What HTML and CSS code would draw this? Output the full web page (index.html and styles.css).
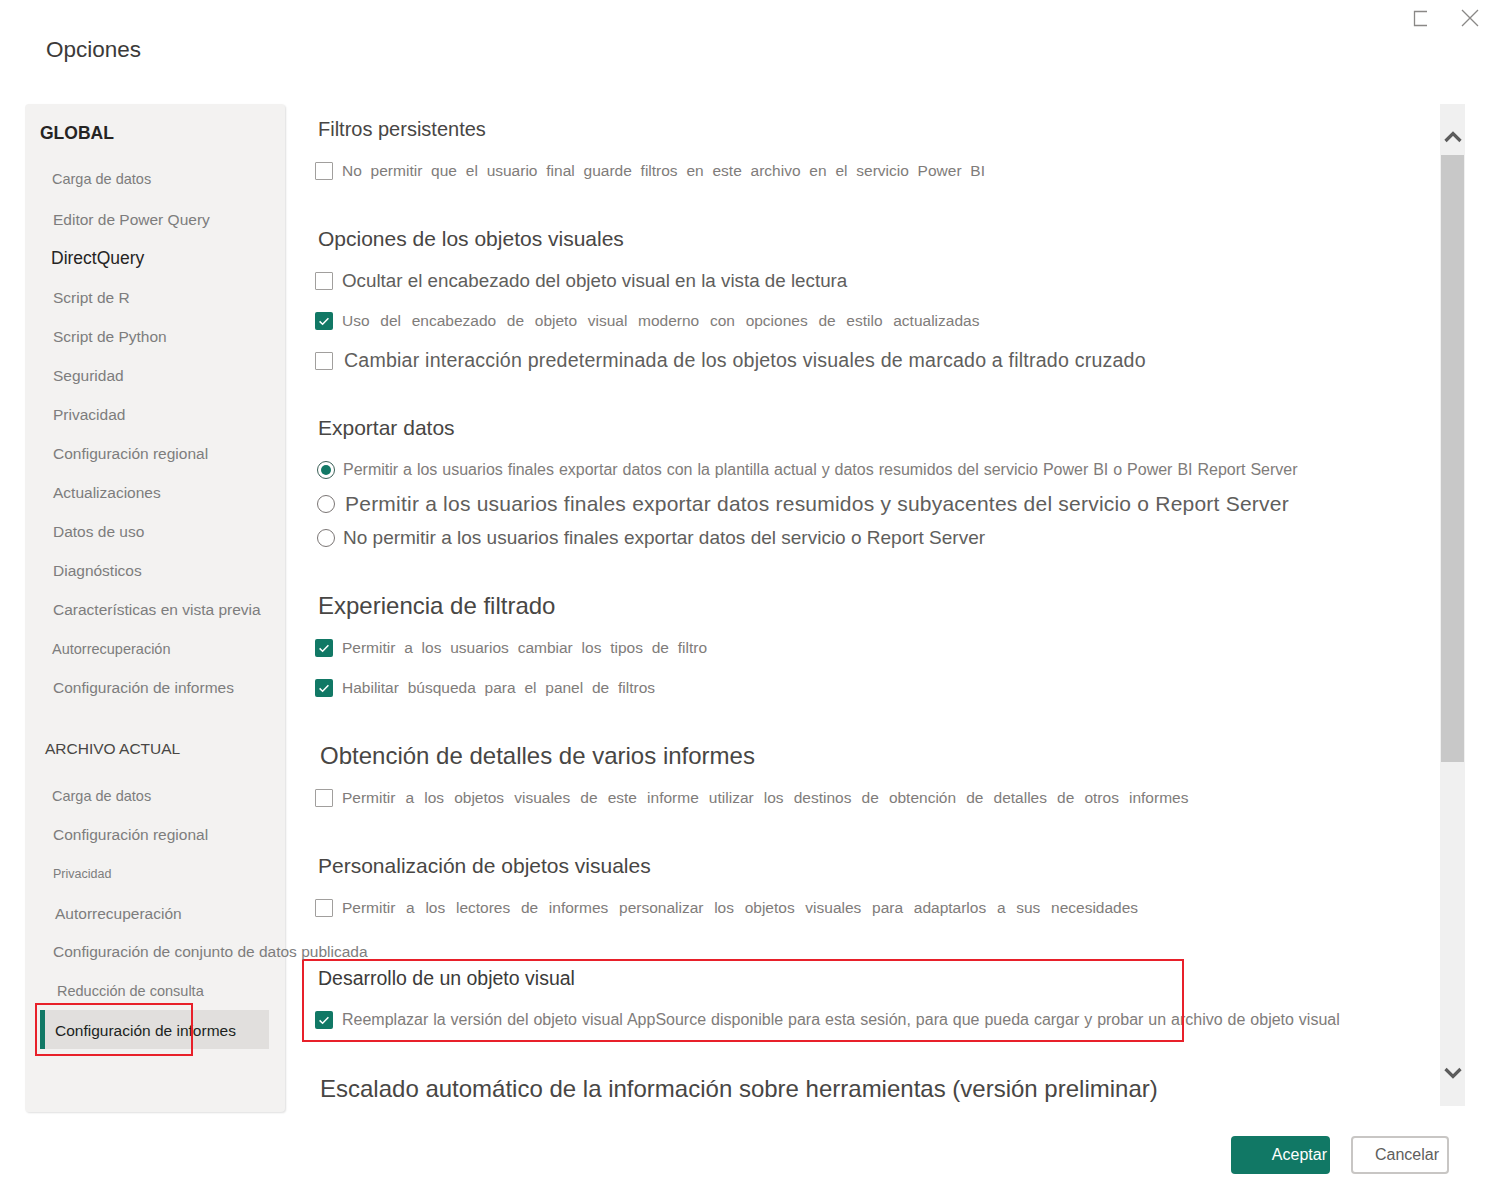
FILE: index.html
```html
<!DOCTYPE html>
<html lang="es">
<head>
<meta charset="utf-8">
<title>Opciones</title>
<link rel="stylesheet" href="styles.css">
</head>
<body>
<div class="window">
  <header class="titlebar">
    <h1 class="title">Opciones</h1>
    <div class="controls">
      <svg class="ctl-max" width="14" height="17" viewBox="0 0 14 17"><path d="M14 1.5H1.5V15.5H14" fill="none" stroke="#8a8886" stroke-width="1.3"/></svg>
      <svg class="ctl-close" width="18" height="18" viewBox="0 0 18 18"><path d="M1 1L17 17M17 1L1 17" fill="none" stroke="#8a8886" stroke-width="1.3"/></svg>
    </div>
  </header>

  <div class="main">
    <nav class="sidebar">
      <div class="nav-head nav-global">GLOBAL</div>
      <div class="nav-list">
        <div class="nav-item s145 nav-first">Carga de datos</div>
        <div class="nav-item">Editor de Power Query</div>
        <div class="nav-item nav-dark">DirectQuery</div>
        <div class="nav-item">Script de R</div>
        <div class="nav-item">Script de Python</div>
        <div class="nav-item">Seguridad</div>
        <div class="nav-item">Privacidad</div>
        <div class="nav-item">Configuración regional</div>
        <div class="nav-item">Actualizaciones</div>
        <div class="nav-item">Datos de uso</div>
        <div class="nav-item">Diagnósticos</div>
        <div class="nav-item">Características en vista previa</div>
        <div class="nav-item s145">Autorrecuperación</div>
        <div class="nav-item">Configuración de informes</div>
      </div>
      <div class="nav-head nav-file">ARCHIVO ACTUAL</div>
      <div class="nav-list nav-list-file">
        <div class="nav-item s145">Carga de datos</div>
        <div class="nav-item">Configuración regional</div>
        <div class="nav-item s125">Privacidad</div>
        <div class="nav-item nav-shift2">Autorrecuperación</div>
        <div class="nav-item">Configuración de conjunto de datos publicada</div>
        <div class="nav-item s145 nav-shift4">Reducción de consulta</div>
        <div class="nav-item nav-selected">Configuración de informes<span class="mark mark-nav"></span></div>
      </div>
    </nav>

    <div class="content">
      <section class="group">
        <h2 class="heading h20">Filtros persistentes</h2>
        <div class="opt"><span class="cb"></span><span class="lbl wide">No permitir que el usuario final guarde filtros en este archivo en el servicio Power BI</span></div>
      </section>

      <section class="group">
        <h2 class="heading h21">Opciones de los objetos visuales</h2>
        <div class="opt"><span class="cb"></span><span class="lbl big19">Ocultar el encabezado del objeto visual en la vista de lectura</span></div>
        <div class="opt"><span class="cb on"><svg width="18" height="18" viewBox="0 0 18 18"><path d="M4.6 9.4L7.6 12.3L13.4 6.3" fill="none" stroke="#fff" stroke-width="1.5"/></svg></span><span class="lbl widest">Uso del encabezado de objeto visual moderno con opciones de estilo actualizadas</span></div>
        <div class="opt"><span class="cb"></span><span class="lbl big20">Cambiar interacción predeterminada de los objetos visuales de marcado a filtrado cruzado</span></div>
      </section>

      <section class="group g-tight">
        <h2 class="heading h21">Exportar datos</h2>
        <div class="radios">
          <div class="opt radio"><span class="rd on"></span><span class="lbl norm">Permitir a los usuarios finales exportar datos con la plantilla actual y datos resumidos del servicio Power BI o Power BI Report Server</span></div>
          <div class="opt radio"><span class="rd"></span><span class="lbl big21">Permitir a los usuarios finales exportar datos resumidos y subyacentes del servicio o Report Server</span></div>
          <div class="opt radio"><span class="rd"></span><span class="lbl big19b">No permitir a los usuarios finales exportar datos del servicio o Report Server</span></div>
        </div>
      </section>

      <section class="group g-loose">
        <h2 class="heading h24">Experiencia de filtrado</h2>
        <div class="opt"><span class="cb on"><svg width="18" height="18" viewBox="0 0 18 18"><path d="M4.6 9.4L7.6 12.3L13.4 6.3" fill="none" stroke="#fff" stroke-width="1.5"/></svg></span><span class="lbl wide">Permitir a los usuarios cambiar los tipos de filtro</span></div>
        <div class="opt"><span class="cb on"><svg width="18" height="18" viewBox="0 0 18 18"><path d="M4.6 9.4L7.6 12.3L13.4 6.3" fill="none" stroke="#fff" stroke-width="1.5"/></svg></span><span class="lbl wide">Habilitar búsqueda para el panel de filtros</span></div>
      </section>

      <section class="group">
        <h2 class="heading h24 shift2">Obtención de detalles de varios informes</h2>
        <div class="opt"><span class="cb"></span><span class="lbl wider">Permitir a los objetos visuales de este informe utilizar los destinos de obtención de detalles de otros informes</span></div>
      </section>

      <section class="group">
        <h2 class="heading h21">Personalización de objetos visuales</h2>
        <div class="opt"><span class="cb"></span><span class="lbl widest">Permitir a los lectores de informes personalizar los objetos visuales para adaptarlos a sus necesidades</span></div>
      </section>

      <section class="group marked g-looser">
        <h2 class="heading h195">Desarrollo de un objeto visual</h2>
        <div class="opt"><span class="cb on"><svg width="18" height="18" viewBox="0 0 18 18"><path d="M4.6 9.4L7.6 12.3L13.4 6.3" fill="none" stroke="#fff" stroke-width="1.5"/></svg></span><span class="lbl norm">Reemplazar la versión del objeto visual AppSource disponible para esta sesión, para que pueda cargar y probar un archivo de objeto visual</span></div>
        <span class="mark mark-content"></span>
      </section>

      <section class="group g-loose">
        <h2 class="heading h24 shift2">Escalado automático de la información sobre herramientas (versión preliminar)</h2>
      </section>
    </div>

    <div class="scrollbar">
      <div class="sb-up"><svg width="18" height="12" viewBox="0 0 18 12"><path d="M1.5 10L9 2.5L16.5 10" fill="none" stroke="#5c5c5c" stroke-width="3.2"/></svg></div>
      <div class="sb-thumb"></div>
      <div class="sb-track"></div>
      <div class="sb-down"><svg width="18" height="12" viewBox="0 0 18 12"><path d="M1.5 2L9 9.5L16.5 2" fill="none" stroke="#5c5c5c" stroke-width="3.2"/></svg></div>
    </div>
  </div>

  <footer class="footer">
    <button class="btn btn-ok">Aceptar</button>
    <button class="btn btn-cancel">Cancelar</button>
  </footer>
</div>
</body>
</html>
```

FILE: styles.css
```css
* { box-sizing: border-box; }

html, body {
  margin: 0;
  padding: 0;
  background: #ffffff;
}

body {
  width: 1486px;
  height: 1190px;
  overflow: hidden;
  font-family: "Liberation Sans", Arial, sans-serif;
  color: #605e5c;
}

.window {
  display: flex;
  flex-direction: column;
  height: 1190px;
}

/* Title bar */
.titlebar {
  display: flex;
  align-items: flex-start;
  height: 104px;
  flex: none;
}

.title {
  margin: 36px 0 0 46px;
  font-size: 22.5px;
  line-height: 28px;
  font-weight: normal;
  color: #3b3a39;
}

.controls {
  margin-left: auto;
  margin-top: 9px;
  margin-right: 7px;
  display: flex;
  align-items: flex-start;
  gap: 34px;
}

.ctl-max { margin-top: 1px; }

/* Main */
.main {
  display: flex;
  height: 1008px;
  flex: none;
}

.sidebar {
  width: 260px;
  margin-left: 25px;
  height: 1008px;
  background: #f3f2f1;
  border-radius: 4px;
  box-shadow: 1px 1px 2px rgba(0, 0, 0, 0.13);
  padding-top: 10px;
  flex: none;
  position: relative;
  z-index: 1;
}

.nav-head {
  height: 39px;
  display: flex;
  align-items: center;
  white-space: nowrap;
}

.nav-global {
  padding-left: 15px;
  font-size: 17.5px;
  font-weight: bold;
  color: #252423;
}

.nav-file {
  margin-top: 22px;
  padding-left: 20px;
  font-size: 15.5px;
  color: #484644;
}

.nav-list { margin-top: 6px; }
.nav-list-file { margin-top: 8px; }

.nav-item {
  height: 39px;
  display: flex;
  align-items: center;
  padding-left: 28px;
  font-size: 15.5px;
  color: #7d7d7d;
  white-space: nowrap;
}

.nav-item.nav-first { margin-bottom: 2px; }
.nav-item.s145 { font-size: 14.5px; padding-left: 27px; }
.nav-item.s125 { font-size: 12.5px; }
.nav-item.nav-shift2 { padding-left: 30px; padding-top: 2px; }
.nav-item.nav-shift4 { padding-left: 32px; }

.nav-dark {
  font-size: 17.5px;
  color: #252423;
  padding-left: 26px;
}

.nav-selected {
  position: relative;
  margin-left: 15px;
  width: 229px;
  background: #e1dfdd;
  border-left: 5px solid #117865;
  padding-left: 10px;
  padding-top: 2px;
  color: #201f1e;
}

/* Red annotation boxes */
.mark {
  position: absolute;
  border: 2px solid #e8202a;
  pointer-events: none;
}

.mark-nav {
  left: -10px;
  top: -7px;
  width: 158px;
  height: 53px;
}

.mark-content {
  left: -13px;
  top: 1px;
  width: 882px;
  height: 83px;
}

/* Content */
.content {
  flex: 1;
  margin-left: 30px;
  padding-top: 5px;
  min-width: 0;
}

.group { position: relative; }
.group + .group { margin-top: 30px; }
.group + .group.g-tight { margin-top: 29px; }
.group + .group.g-loose { margin-top: 31px; }
.group + .group.g-looser { margin-top: 32px; }

.heading {
  margin: 0;
  height: 40px;
  display: flex;
  align-items: center;
  padding-left: 3px;
  font-weight: normal;
  color: #484644;
  white-space: nowrap;
}

.heading.shift2 { padding-left: 5px; }

.h195 { font-size: 19.5px; color: #3b3a39; }
.h20 { font-size: 20px; }
.h21 { font-size: 21px; }
.h24 { font-size: 24px; }

.opt {
  height: 40px;
  display: flex;
  align-items: center;
  gap: 9px;
  white-space: nowrap;
  padding-top: 3px;
}

.radios { margin-top: 5px; }
.opt.radio { height: 34px; gap: 8px; padding-left: 2px; padding-top: 0; }

.lbl { color: #807c7a; }

.wide { font-size: 15.5px; word-spacing: 4.5px; }
.wider { font-size: 15.5px; word-spacing: 5.8px; }
.widest { font-size: 15.5px; word-spacing: 6.4px; }
.norm { font-size: 16px; word-spacing: 0.5px; }
.big19 { font-size: 18.8px; color: #605e5c; }
.big19b { font-size: 19px; color: #605e5c; }
.big20 { font-size: 19.6px; letter-spacing: 0.2px; color: #605e5c; margin-left: 2px; }
.big21 { font-size: 21px; letter-spacing: 0.22px; color: #605e5c; margin-left: 2px; }

.cb {
  width: 18px;
  height: 18px;
  flex: none;
  border: 1px solid #a19f9d;
  border-radius: 1px;
  background: #fff;
  display: flex;
}

.cb.on {
  border: none;
  background: #117865;
  border-radius: 2px;
}

.rd {
  width: 18px;
  height: 18px;
  flex: none;
  border: 1.5px solid #7a7574;
  border-radius: 50%;
  background: #fff;
  position: relative;
}

.rd.on {
  border-color: #3b5f57;
}

.rd.on::after {
  content: "";
  position: absolute;
  left: 2.5px;
  top: 2.5px;
  width: 10px;
  height: 10px;
  border-radius: 50%;
  background: #117865;
}

/* Scrollbar */
.scrollbar {
  width: 25px;
  height: 1002px;
  margin-right: 21px;
  flex: none;
  background: #f0f0f0;
  display: flex;
  flex-direction: column;
}

.sb-up {
  height: 51px;
  display: flex;
  justify-content: center;
  align-items: flex-start;
  padding-top: 27px;
}

.sb-thumb {
  height: 607px;
  margin: 0 1px;
  background: #c8c8c8;
}

.sb-track { flex: 1; }

.sb-down {
  height: 66px;
  display: flex;
  justify-content: center;
  align-items: center;
}

/* Footer */
.footer {
  display: flex;
  justify-content: flex-end;
  gap: 21px;
  padding-top: 24px;
  padding-right: 37px;
}

.btn {
  height: 38px;
  font-family: "Liberation Sans", Arial, sans-serif;
  font-size: 16px;
  border-radius: 4px;
  text-align: right;
  padding: 0;
  cursor: pointer;
}

.btn-ok {
  width: 99px;
  background: #117865;
  border: none;
  color: #ffffff;
  padding-right: 3px;
}

.btn-cancel {
  width: 98px;
  background: #ffffff;
  border: 2px solid #c8c6c4;
  color: #605e5c;
  padding-right: 8px;
}
```
